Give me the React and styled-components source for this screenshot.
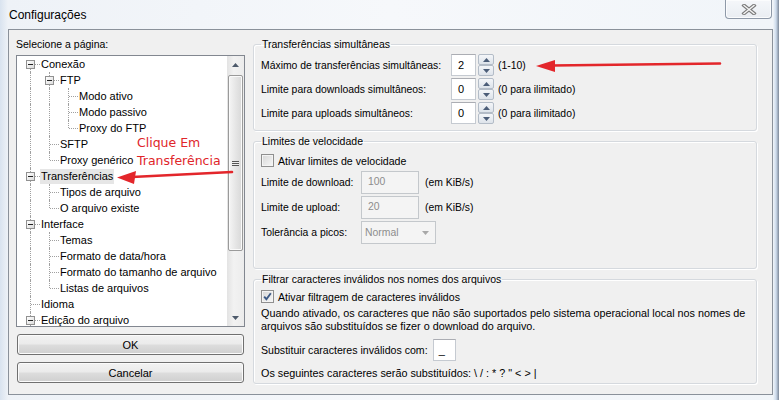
import React from 'react'
import styled, { createGlobalStyle } from 'styled-components'

const GlobalStyle = createGlobalStyle`
  html, body { margin: 0; padding: 0; width: 779px; height: 400px; overflow: hidden; }
  body { font-family: "Liberation Sans", Arial, sans-serif; font-size: 11px; color: #000; }
`

const tree = [
  { label: 'Conexão', children: [
    { label: 'FTP', children: [{ label: 'Modo ativo' }, { label: 'Modo passivo' }, { label: 'Proxy do FTP' }] },
    { label: 'SFTP' },
    { label: 'Proxy genérico' },
  ] },
  { label: 'Transferências', selected: true, children: [{ label: 'Tipos de arquivo' }, { label: 'O arquivo existe' }] },
  { label: 'Interface', children: [
    { label: 'Temas' }, { label: 'Formato de data/hora' }, { label: 'Formato do tamanho de arquivo' }, { label: 'Listas de arquivos' },
  ] },
  { label: 'Idioma' },
  { label: 'Edição do arquivo', children: [] },
]

// turn the nested tree into rows with their guide columns
function flatten(nodes, above = [], root = true, out = []) {
  nodes.forEach((n, i) => {
    const last = !root && i === nodes.length - 1
    const own = root && i === 0 ? 'first' : last ? 'elbow' : 'tee'
    out.push({ ...n, guides: [...above.map(c => (c ? 'pipe' : 'blank')), own], expander: !!n.children })
    if (n.children) flatten(n.children, [...above, !last], false, out)
  })
  return out
}

function App() {
  const rows = flatten(tree)
  return (
    <>
      <GlobalStyle />
      <Window>
        <TitleBar>
          <Title>Configurações</Title>
          <CloseButton>
            <svg width="16" height="11" viewBox="0 0 16 11">
              <path d="M3 1.5 L13 9.5 M13 1.5 L3 9.5" stroke="#7c7c7c" strokeWidth="3.6" strokeLinecap="square" fill="none" />
              <path d="M3 1.5 L13 9.5 M13 1.5 L3 9.5" stroke="#f6f6f6" strokeWidth="1.4" strokeLinecap="square" fill="none" />
            </svg>
          </CloseButton>
        </TitleBar>

        <Client>
          <LeftPane>
            <PaneLabel>Selecione a página:</PaneLabel>
            <TreeBox>
              <TreeList>
                {rows.map((r, i) => (
                  <TreeRow key={i}>
                    {r.guides.map((g, j) => (
                      <Guide key={j} $type={g}>
                        {r.expander && j === r.guides.length - 1 && <Expander />}
                      </Guide>
                    ))}
                    <NodeLabel $selected={r.selected}>{r.label}</NodeLabel>
                  </TreeRow>
                ))}
              </TreeList>
              <ScrollBar>
                <ScrollArrow>
                  <svg width="7" height="4" viewBox="0 0 7 4"><path d="M0 4 L3.5 0 L7 4 Z" fill="#4d5a6b" /></svg>
                </ScrollArrow>
                <Track>
                  <Thumb>
                    <Grip />
                  </Thumb>
                </Track>
                <ScrollArrow>
                  <svg width="7" height="4" viewBox="0 0 7 4"><path d="M0 0 L3.5 4 L7 0 Z" fill="#4d5a6b" /></svg>
                </ScrollArrow>
              </ScrollBar>
            </TreeBox>
            <Button>OK</Button>
            <Button>Cancelar</Button>
          </LeftPane>

          <RightPane>
            <Group $h={94}>
              <Legend>Transferências simultâneas</Legend>
              <Rows $top={2}>
                <FieldRow $label={190} $h={24}>
                  <span>Máximo de transferências simultâneas:</span>
                  <Spin value="2" />
                  <span>(1-10)</span>
                </FieldRow>
                <FieldRow $label={190} $h={24}>
                  <span>Limite para downloads simultâneos:</span>
                  <Spin value="0" />
                  <span>(0 para ilimitado)</span>
                </FieldRow>
                <FieldRow $label={190} $h={24}>
                  <span>Limite para uploads simultâneos:</span>
                  <Spin value="0" />
                  <span>(0 para ilimitado)</span>
                </FieldRow>
              </Rows>
            </Group>

            <Group $h={135}>
              <Legend>Limites de velocidade</Legend>
              <Rows $top={3}>
                <CheckRow><CheckBox /> Ativar limites de velocidade</CheckRow>
                <FieldRow $label={100} $h={25}>
                  <span>Limite de download:</span>
                  <DisabledInput>100</DisabledInput>
                  <span>(em KiB/s)</span>
                </FieldRow>
                <FieldRow $label={100} $h={25}>
                  <span>Limite de upload:</span>
                  <DisabledInput>20</DisabledInput>
                  <span>(em KiB/s)</span>
                </FieldRow>
                <FieldRow $label={100} $h={25}>
                  <span>Tolerância a picos:</span>
                  <Select>
                    Normal
                    <svg width="7" height="4" viewBox="0 0 7 4"><path d="M0 0 L3.5 4 L7 0 Z" fill="#a8a8a8" /></svg>
                  </Select>
                  <span />
                </FieldRow>
              </Rows>
            </Group>

            <Group $h={112}>
              <Legend>Filtrar caracteres inválidos nos nomes dos arquivos</Legend>
              <Rows $top={1}>
                <CheckRow><CheckBox checked /> Ativar filtragem de caracteres inválidos</CheckRow>
                <Paragraph>
                  Quando ativado, os caracteres que não são suportados pelo sistema operacional local nos nomes de<br />
                  arquivos são substituídos se fizer o download do arquivo.
                </Paragraph>
                <InlineRow>
                  Substituir caracteres inválidos com:
                  <SmallInput>_</SmallInput>
                </InlineRow>
                <TextLine>Os seguintes caracteres serão substituídos: \ / : * ? " &lt; &gt; |</TextLine>
              </Rows>
            </Group>
          </RightPane>
        </Client>

        <Annotation>Clique Em<br />Transferência</Annotation>
        <ArrowLayer width="779" height="400" viewBox="0 0 779 400">
          <path d="M232 172 L132 177" stroke="#e3262b" strokeWidth="2.6" fill="none" strokeLinecap="round" />
          <path d="M117 177.5 L136 171 L134 184 Z" fill="#e3262b" />
          <path d="M720 63.5 L552 65.5" stroke="#e3262b" strokeWidth="2.6" fill="none" strokeLinecap="round" />
          <path d="M536 66 L555 60 L555 72 Z" fill="#e3262b" />
        </ArrowLayer>
      </Window>
    </>
  )
}

function Spin({ value }) {
  return (
    <SpinBox>
      <SpinInput>{value}</SpinInput>
      <SpinButtons>
        <SpinHalf>
          <svg width="7" height="4" viewBox="0 0 7 4"><path d="M0 4 L3.5 0 L7 4 Z" fill="#4b5d78" /></svg>
        </SpinHalf>
        <SpinHalf>
          <svg width="7" height="4" viewBox="0 0 7 4"><path d="M0 0 L3.5 4 L7 0 Z" fill="#4b5d78" /></svg>
        </SpinHalf>
      </SpinButtons>
    </SpinBox>
  )
}

function CheckBox({ checked }) {
  return (
    <Check>
      {checked && (
        <svg width="11" height="11" viewBox="0 0 11 11">
          <path d="M2.2 5.6 L4.4 8.2 L8.8 2.2" stroke="#3d5a86" strokeWidth="1.9" fill="none" />
        </svg>
      )}
    </Check>
  )
}

export default App

const Window = styled.div`
  position: relative;
  width: 779px;
  height: 400px;
  box-sizing: border-box;
  display: flex;
  flex-direction: column;
  padding: 0 6px 5px 8px;
  background: linear-gradient(90deg, #d9e3ef 0, #eef2f7 8px, #f6f8fb 50%, #f1f5f9 773px, #cddbec 776px, #7c8898 779px);
`

const TitleBar = styled.div`
  height: 29px;
  display: flex;
  align-items: flex-start;
  justify-content: space-between;
`

const Title = styled.div`
  font-size: 12px;
  margin: 8px 0 0 1px;
  color: #000;
`

const CloseButton = styled.div`
  width: 47px;
  height: 19px;
  box-sizing: border-box;
  margin-right: 1px;
  border: 1px solid #8e99a8;
  border-top: none;
  border-radius: 0 0 4px 4px;
  background: linear-gradient(180deg, #f5f7fa, #e9edf2);
  box-shadow: inset 0 0 0 1px #fbfcfd;
  display: flex;
  align-items: center;
  justify-content: center;
`

const Client = styled.div`
  flex: 1;
  display: flex;
  background: #f0f0f0;
  border: 1px solid #8a919a;
`

const LeftPane = styled.div`
  width: 229px;
  padding: 7px 0 0 7px;
  display: flex;
  flex-direction: column;
`

const PaneLabel = styled.div`
  font-size: 10.5px;
  line-height: 14px;
  height: 14px;
  margin-bottom: 4px;
`

const TreeBox = styled.div`
  height: 272px;
  box-sizing: border-box;
  border: 1px solid #828790;
  background: #fff;
  display: flex;
  overflow: hidden;
`

const TreeList = styled.div`
  flex: 1;
  padding-left: 4px;
  overflow: hidden;
`

const TreeRow = styled.div`
  height: 16px;
  display: flex;
  align-items: center;
  white-space: nowrap;
`

const Guide = styled.div`
  position: relative;
  width: 19px;
  height: 16px;
  flex: none;
  &::before {
    content: '';
    position: absolute;
    left: 9px;
    top: ${p => (p.$type === 'first' ? '8px' : '0')};
    height: ${p => (p.$type === 'elbow' ? '8px' : p.$type === 'first' ? '8px' : '16px')};
    border-left: 1px dotted #a0a0a0;
    display: ${p => (p.$type === 'blank' ? 'none' : 'block')};
  }
  &::after {
    content: '';
    position: absolute;
    left: 10px;
    top: 8px;
    width: 9px;
    border-top: 1px dotted #a0a0a0;
    display: ${p => (p.$type === 'pipe' || p.$type === 'blank' ? 'none' : 'block')};
  }
`

const Expander = styled.div`
  position: absolute;
  z-index: 1;
  left: 5px;
  top: 4px;
  width: 9px;
  height: 9px;
  box-sizing: border-box;
  border: 1px solid #919191;
  background: linear-gradient(135deg, #ffffff, #dcdcdc);
  &::after {
    content: '';
    position: absolute;
    left: 1px;
    top: 3px;
    width: 5px;
    height: 1px;
    background: #222;
  }
`

const NodeLabel = styled.span`
  padding: 0 1px;
  line-height: 15px;
  background: ${p => (p.$selected ? '#e6e6e6' : 'transparent')};
`

const ScrollBar = styled.div`
  width: 17px;
  flex: none;
  display: flex;
  flex-direction: column;
  background: linear-gradient(90deg, #e3e3e3, #f2f2f2 40%, #ececec);
`

const ScrollArrow = styled.div`
  height: 17px;
  display: flex;
  align-items: center;
  justify-content: center;
`

const Track = styled.div`
  flex: 1;
  padding-top: 2px;
`

const Thumb = styled.div`
  height: 176px;
  margin: 0 1px;
  box-sizing: border-box;
  border: 1px solid #9a9a9a;
  border-radius: 2px;
  background: linear-gradient(90deg, #f5f5f5, #e6e6e6 50%, #d8d8d8);
  box-shadow: inset 0 0 0 1px #fafafa;
  display: flex;
  align-items: center;
  justify-content: center;
`

const Grip = styled.div`
  width: 7px;
  height: 5px;
  background: repeating-linear-gradient(180deg, #555 0 1px, #eee 1px 2px);
`

const Button = styled.button`
  width: 227px;
  height: 21px;
  margin: 7px 0 0 1px;
  padding: 0;
  font-family: "Liberation Sans", Arial, sans-serif;
  font-size: 11px;
  color: #000;
  border: 1px solid #707070;
  border-radius: 3px;
  background: linear-gradient(180deg, #f2f2f2 0%, #ebebeb 48%, #dddddd 52%, #cfcfcf 100%);
  box-shadow: inset 0 0 0 1px #fbfbfb;
`

const RightPane = styled.div`
  width: 504px;
  margin-left: 8px;
  padding-top: 7px;
  display: flex;
  flex-direction: column;
  gap: 3px;
  font-size: 10.4px;
`

const Group = styled.fieldset`
  margin: 0;
  padding: 0 7px;
  min-width: 0;
  height: ${p => p.$h}px;
  box-sizing: border-box;
  border: 1px solid #d5d9de;
  border-radius: 3px;
  box-shadow: inset 1px 1px 0 #fff, 1px 1px 0 #fff;
`

const Legend = styled.legend`
  padding: 0 1px;
  line-height: 14px;
  font-size: 10.5px;
`

const Rows = styled.div`
  margin-top: ${p => p.$top}px;
  display: flex;
  flex-direction: column;
`

const FieldRow = styled.div`
  display: grid;
  grid-template-columns: ${p => p.$label}px auto 1fr;
  align-items: center;
  height: ${p => p.$h}px;
`

const SpinBox = styled.div`
  display: flex;
  gap: 2px;
  margin-right: 4px;
`

const SpinInput = styled.div`
  width: 25px;
  height: 22px;
  box-sizing: border-box;
  border: 1px solid #c5cad1;
  border-top-color: #abadb3;
  background: #fff;
  padding-left: 6px;
  line-height: 20px;
  font-size: 11px;
`

const SpinButtons = styled.div`
  width: 16px;
  height: 22px;
  display: flex;
  flex-direction: column;
`

const SpinHalf = styled.div`
  flex: 1;
  box-sizing: border-box;
  border: 1px solid #b3bcc7;
  border-radius: 2px;
  background: linear-gradient(180deg, #f4f6f9, #dde3ea);
  display: flex;
  align-items: center;
  justify-content: center;
`

const CheckRow = styled.div`
  display: flex;
  align-items: center;
  gap: 4px;
  height: 19px;
  font-size: 10.6px;
`

const Check = styled.div`
  width: 13px;
  height: 13px;
  box-sizing: border-box;
  border: 1px solid #8f8f8f;
  background: linear-gradient(135deg, #d6d6d6, #f7f7f7);
  box-shadow: inset 0 0 0 1px #f4f4f4;
  display: flex;
  align-items: center;
  justify-content: center;
`

const DisabledInput = styled.div`
  width: 58px;
  height: 23px;
  box-sizing: border-box;
  border: 1px solid #c4c8cc;
  background: #f4f4f4;
  color: #8d8d8d;
  padding-left: 6px;
  line-height: 20px;
  margin-right: 6px;
`

const Select = styled.div`
  width: 75px;
  height: 23px;
  box-sizing: border-box;
  border: 1px solid #c4c8cc;
  background: #f4f4f4;
  color: #8d8d8d;
  padding: 0 6px 0 3px;
  display: flex;
  align-items: center;
  justify-content: space-between;
`

const Paragraph = styled.div`
  font-size: 10.8px;
  line-height: 13px;
  margin-top: 1px;
`

const InlineRow = styled.div`
  display: flex;
  align-items: center;
  gap: 5px;
  height: 24px;
  margin-top: 5px;
  font-size: 10.6px;
`

const SmallInput = styled.div`
  width: 23px;
  height: 22px;
  box-sizing: border-box;
  border: 1px solid #c5cad1;
  border-top-color: #abadb3;
  background: #fff;
  padding-left: 5px;
  line-height: 20px;
  font-size: 11px;
`

const TextLine = styled.div`
  font-size: 10.8px;
  line-height: 14px;
  margin-top: 4px;
`

const Annotation = styled.div`
  position: absolute;
  left: 137px;
  top: 134px;
  font-family: "DejaVu Sans", sans-serif;
  font-size: 12.5px;
  line-height: 18px;
  color: #e0262a;
  pointer-events: none;
`

const ArrowLayer = styled.svg`
  position: absolute;
  left: 0;
  top: 0;
  pointer-events: none;
`
